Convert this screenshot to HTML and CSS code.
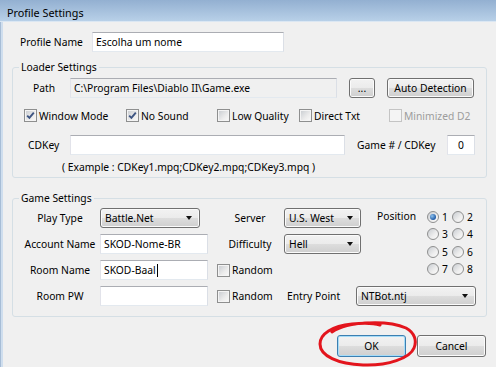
FILE: index.html
```html
<!DOCTYPE html>
<html>
<head>
<meta charset="utf-8">
<title>Profile Settings</title>
<link rel="stylesheet" href="styles.css">
</head>
<body>
<div class="window">
  <div class="titlebar">Profile Settings</div>

  <div class="row profile">
    <span class="lbl-profile">Profile Name</span>
    <div class="textbox w-profile">Escolha um nome</div>
  </div>

  <fieldset class="group loader">
    <legend>Loader Settings</legend>
    <div class="row path">
      <span class="lbl-path">Path</span>
      <div class="textbox readonly w-path">C:\Program Files\Diablo II\Game.exe</div>
      <div class="btn btn-dots">...</div>
      <div class="btn btn-auto">Auto Detection</div>
    </div>
    <div class="row checks">
      <div class="check c1"><span class="box on"><svg viewBox="0 0 11 11" width="11" height="11"><path d="M2.2 5.6 L4.4 7.9 L8.8 2.6" fill="none" stroke="#3e5583" stroke-width="1.9"/></svg></span>Window Mode</div>
      <div class="check c2"><span class="box on"><svg viewBox="0 0 11 11" width="11" height="11"><path d="M2.2 5.6 L4.4 7.9 L8.8 2.6" fill="none" stroke="#3e5583" stroke-width="1.9"/></svg></span>No Sound</div>
      <div class="check c3"><span class="box"></span>Low Quality</div>
      <div class="check c4"><span class="box"></span>Direct Txt</div>
      <div class="check disabled"><span class="box"></span>Minimized D2</div>
    </div>
    <div class="row cdkey">
      <span class="lbl-cdkey">CDKey</span>
      <div class="textbox w-cdkey"></div>
      <span class="lbl-game">Game # / CDKey</span>
      <div class="textbox w-game">0</div>
    </div>
    <div class="example">( Example : CDKey1.mpq;CDKey2.mpq;CDKey3.mpq )</div>
  </fieldset>

  <fieldset class="group game">
    <legend>Game Settings</legend>
    <div class="game-top">
      <div class="game-rows">
        <div class="row">
          <span class="glabel">Play Type</span>
          <div class="gcell"><div class="select w-play">Battle.Net<span class="arrow"></span></div></div>
          <span class="glabel2">Server</span>
          <div class="select w-sel2">U.S. West<span class="arrow"></span></div>
        </div>
        <div class="row">
          <span class="glabel">Account Name</span>
          <div class="textbox w-game-in">SKOD-Nome-BR</div>
          <span class="glabel2">Difficulty</span>
          <div class="select w-sel2">Hell<span class="arrow"></span></div>
        </div>
        <div class="row">
          <span class="glabel">Room Name</span>
          <div class="textbox w-game-in">SKOD-Baal<span class="caret"></span></div>
          <div class="check random"><span class="box"></span>Random</div>
        </div>
      </div>
      <div class="position">
        <span class="lbl-pos">Position</span>
        <div class="radios">
          <div class="radio"><span class="dot on"></span>1</div>
          <div class="radio"><span class="dot"></span>2</div>
          <div class="radio"><span class="dot"></span>3</div>
          <div class="radio"><span class="dot"></span>4</div>
          <div class="radio"><span class="dot"></span>5</div>
          <div class="radio"><span class="dot"></span>6</div>
          <div class="radio"><span class="dot"></span>7</div>
          <div class="radio"><span class="dot"></span>8</div>
        </div>
      </div>
    </div>
    <div class="row game-row4">
      <span class="glabel">Room PW</span>
      <div class="textbox w-game-in"></div>
      <div class="check random"><span class="box"></span>Random</div>
      <span class="lbl-entry">Entry Point</span>
      <div class="select w-entry">NTBot.ntj<span class="arrow"></span></div>
    </div>
  </fieldset>

  <div class="actions">
    <div class="btn btn-ok">OK</div>
    <div class="btn btn-cancel">Cancel</div>
  </div>

  <!-- hand drawn mark around the OK button -->
  <svg class="scribble" width="100" height="47" viewBox="0 0 100 47">
    <path d="M14 12 C30 1, 70 0, 88 8 C97 13, 99 21, 96 28 C92 38, 70 46, 45 45 C20 44, 2 36, 2 24 C2 14, 14 6, 34 4 C45 3, 55 3, 62 5" fill="none" stroke="#e3151d" stroke-width="3" stroke-linecap="round"/>
  </svg>
</div>
</body>
</html>
```

FILE: styles.css
```css
body {
  margin: 0;
  font-family: "Noto Sans", "Open Sans", sans-serif;
  font-size: 10.3px;
  color: #000;
  background: #f0f0f0;
}

/* dialog frame */
.window {
  position: relative;
  width: 496px;
  height: 367px;
  overflow: hidden;
  background: #f0f0f0;
  box-shadow: inset 1px 0 #a7bdd6, inset 3px 0 #cfdeee;
}

.titlebar {
  height: 21px;
  line-height: 25px;
  padding-left: 7px;
  font-size: 10.8px;
  background: linear-gradient(#93b0d1, #b8d0e8);
  border-bottom: 1px solid #dbe7f3;
}

.row {
  display: flex;
  align-items: center;
  height: 20px;
  white-space: nowrap;
}

/* text boxes */
.textbox {
  box-sizing: border-box;
  height: 20px;
  line-height: 18px;
  padding: 0 3px;
  background: #fff;
  border: 1px solid;
  border-color: #abadb3 #dbdfe6 #e3e9ef #e2e3ea;
  overflow: hidden;
  white-space: nowrap;
}
.textbox.readonly { background: #f0f0f0; }

.caret {
  display: inline-block;
  width: 1px;
  height: 13px;
  margin-left: 1px;
  background: #000;
  vertical-align: -3px;
}

/* buttons */
.btn {
  box-sizing: border-box;
  height: 20px;
  line-height: 18px;
  text-align: center;
  border: 1px solid #707070;
  border-radius: 3px;
  background: linear-gradient(#f2f2f2, #ebebeb 50%, #dddddd 50%, #cfcfcf);
  box-shadow: inset 0 0 0 1px #fbfbfb;
}

/* combo boxes */
.select {
  box-sizing: border-box;
  display: flex;
  align-items: center;
  height: 20px;
  padding-left: 4px;
  border: 1px solid #707070;
  border-radius: 3px;
  background: linear-gradient(#f2f2f2, #ebebeb 50%, #dddddd 50%, #cfcfcf);
  box-shadow: inset 0 0 0 1px #fbfbfb;
}
.arrow {
  margin-left: auto;
  margin-right: 7px;
  border-left: 3.5px solid transparent;
  border-right: 3.5px solid transparent;
  border-top: 4px solid #111;
}

/* check boxes */
.check {
  display: flex;
  align-items: center;
  gap: 2px;
}
.box {
  box-sizing: border-box;
  display: flex;
  align-items: center;
  justify-content: center;
  width: 13px;
  height: 13px;
  border: 1px solid #8e8f8f;
  background: linear-gradient(135deg, #c6cacf, #ececec 60%, #fafafa);
  box-shadow: inset 0 0 0 1px #f4f4f4;
}
.check.disabled { color: #9d9d9d; }
.check.disabled .box {
  border-color: #c4c4c4;
  background: #f4f4f4;
  box-shadow: none;
}

/* radio buttons */
.radio {
  display: flex;
  align-items: center;
  gap: 3px;
}
.dot {
  box-sizing: border-box;
  display: flex;
  align-items: center;
  justify-content: center;
  width: 12px;
  height: 12px;
  border: 1px solid #8e8f8f;
  border-radius: 50%;
  background: linear-gradient(135deg, #c8ccd1, #eeeeee 60%, #fbfbfb);
}
.dot.on::after {
  content: "";
  width: 6px;
  height: 6px;
  border-radius: 50%;
  background: radial-gradient(circle at 35% 35%, #8fc3ee, #1f5aa6 70%);
}

/* group boxes */
.group {
  margin: 0 9px 0 12px;
  padding: 0;
  min-width: 0;
  border: 1px solid #d5dfe5;
  border-radius: 3px;
}
.group legend {
  margin-left: 6px;
  padding: 0 2px;
  line-height: 16px;
}
.loader { margin-top: 7px; }
.game { margin-top: 12px; padding-bottom: 10px; }

/* profile name */
.profile { margin-top: 10px; padding-left: 20px; }
.lbl-profile { width: 72px; }
.w-profile { width: 192px; }

/* loader settings */
.path { margin-top: 3px; padding-left: 20px; }
.lbl-path { width: 37px; }
.w-path { width: 267px; }
.btn-dots { width: 26px; margin-left: 12px; }
.btn-auto { width: 87px; margin-left: 12px; }

.checks { margin-top: 11px; padding-left: 11px; height: 13px; }
.c1 { width: 102px; }
.c2 { width: 91px; }
.c3 { width: 82px; }
.c4 { width: 90px; }

.cdkey { margin-top: 13px; padding-left: 15px; }
.lbl-cdkey { width: 42px; }
.w-cdkey { width: 275px; }
.lbl-game { width: 90px; margin-left: 12px; }
.w-game { width: 28px; text-align: center; }

.example {
  margin-top: 5px;
  padding: 0 0 3px 49px;
  line-height: 14px;
}

/* game settings */
.game-top {
  display: flex;
  padding: 2px 0 0 7px;
}
.game-rows {
  display: flex;
  flex-direction: column;
  gap: 6px;
}
.glabel { width: 80px; text-align: center; }
.gcell { width: 108px; }
.w-play { width: 100px; }
.w-game-in { width: 108px; }
.glabel2 { width: 68px; margin-left: 8px; text-align: center; }
.w-sel2 { width: 77px; }
.random { width: 60px; margin-left: 9px; }

.position {
  display: flex;
  margin-left: 16px;
}
.lbl-pos { width: 50px; line-height: 17.5px; }
.radios {
  display: grid;
  grid-template-columns: 25px 25px;
  grid-auto-rows: 17.5px;
}

.game-row4 { margin-top: 6px; padding-left: 7px; }
.lbl-entry { width: 69px; margin-left: 10px; }
.w-entry { width: 120px; }

/* dialog buttons */
.actions {
  display: flex;
  justify-content: flex-end;
  gap: 11px;
  margin-top: 18px;
  padding-right: 10px;
}
.actions .btn { width: 69px; height: 22px; line-height: 20px; }
.btn-ok {
  border-color: #3c7fb1;
  box-shadow: inset 0 0 0 1px #a6dcf8;
}

.scribble {
  position: absolute;
  left: 318px;
  top: 320px;
}
```
